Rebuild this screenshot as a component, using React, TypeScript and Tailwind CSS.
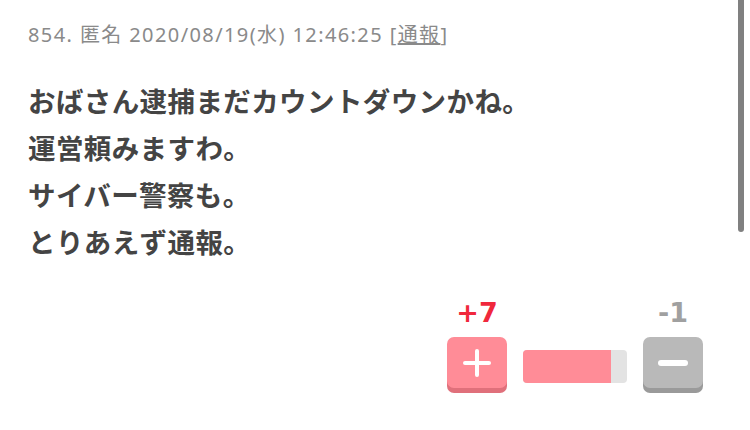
const jp = "font-['Noto_Sans_CJK_JP',sans-serif]";

const lines = [
  "おばさん逮捕まだカウントダウンかね。",
  "運営頼みますわ。",
  "サイバー警察も。",
  "とりあえず通報。",
];

function VoteButton({ kind }: { kind: "plus" | "minus" }) {
  const face =
    kind === "plus"
      ? "bg-[#ff8c97] shadow-[0_5px_0_#e0707b]"
      : "bg-[#b9b9b9] shadow-[0_5px_0_#9a9a9a]";
  return (
    <button className={`relative flex h-[51px] w-[60px] items-center justify-center rounded-[7px] ${face}`}>
      {kind === "plus" ? (
        <span className="relative block h-[28px] w-[28px]">
          <span className="absolute left-0 top-[12px] h-[4px] w-[28px] rounded-full bg-white" />
          <span className="absolute left-[12px] top-0 h-[28px] w-[4px] rounded-full bg-white" />
        </span>
      ) : (
        <span className="block h-[6px] w-[30px] rounded-full bg-white" />
      )}
    </button>
  );
}

export default function App() {
  const plus = 7;
  const minus = 1;
  const ratio = plus / (plus + minus);

  return (
    <div className={`relative h-[430px] w-[750px] overflow-hidden bg-white ${jp}`}>
      <div className="px-[28px] pt-[22px]">
        <p className="font-['Noto_Sans','Noto_Sans_CJK_JP',sans-serif] text-[20px] leading-[26px] tracking-[1.4px] text-[#8a8a8a]">
          854. 匿名 2020/08/19(水) 12:46:25 [<span className="underline">通報</span>]
        </p>
        <div className="mt-[29px] text-[27.5px] font-bold leading-[47px] tracking-[0.4px] text-[#444]">
          {lines.map((l, i) => (
            <p key={i}>{l}</p>
          ))}
        </div>
      </div>

      <div className="mt-[33px] flex items-start justify-end gap-[16px] pr-[47px] font-['DejaVu_Sans',sans-serif]">
        <div className="flex w-[60px] flex-col items-center">
          <span className="text-[27px] font-bold leading-[30px] text-[#f0283c]">+{plus}</span>
          <div className="mt-[9px]">
            <VoteButton kind="plus" />
          </div>
        </div>
        <div className="mt-[52px] h-[33px] w-[104px] overflow-hidden rounded-[4px] bg-[#e3e3e3]">
          <div className="h-full bg-[#ff8c97]" style={{ width: `${ratio * 100 - 3}%` }} />
        </div>
        <div className="flex w-[60px] flex-col items-center">
          <span className="text-[27px] font-bold leading-[30px] text-[#a0a0a0]">-{minus}</span>
          <div className="mt-[9px]">
            <VoteButton kind="minus" />
          </div>
        </div>
      </div>

      <div className="absolute right-[6px] top-0 h-[232px] w-[6px] rounded-b-full bg-[#808080]" />
    </div>
  );
}
